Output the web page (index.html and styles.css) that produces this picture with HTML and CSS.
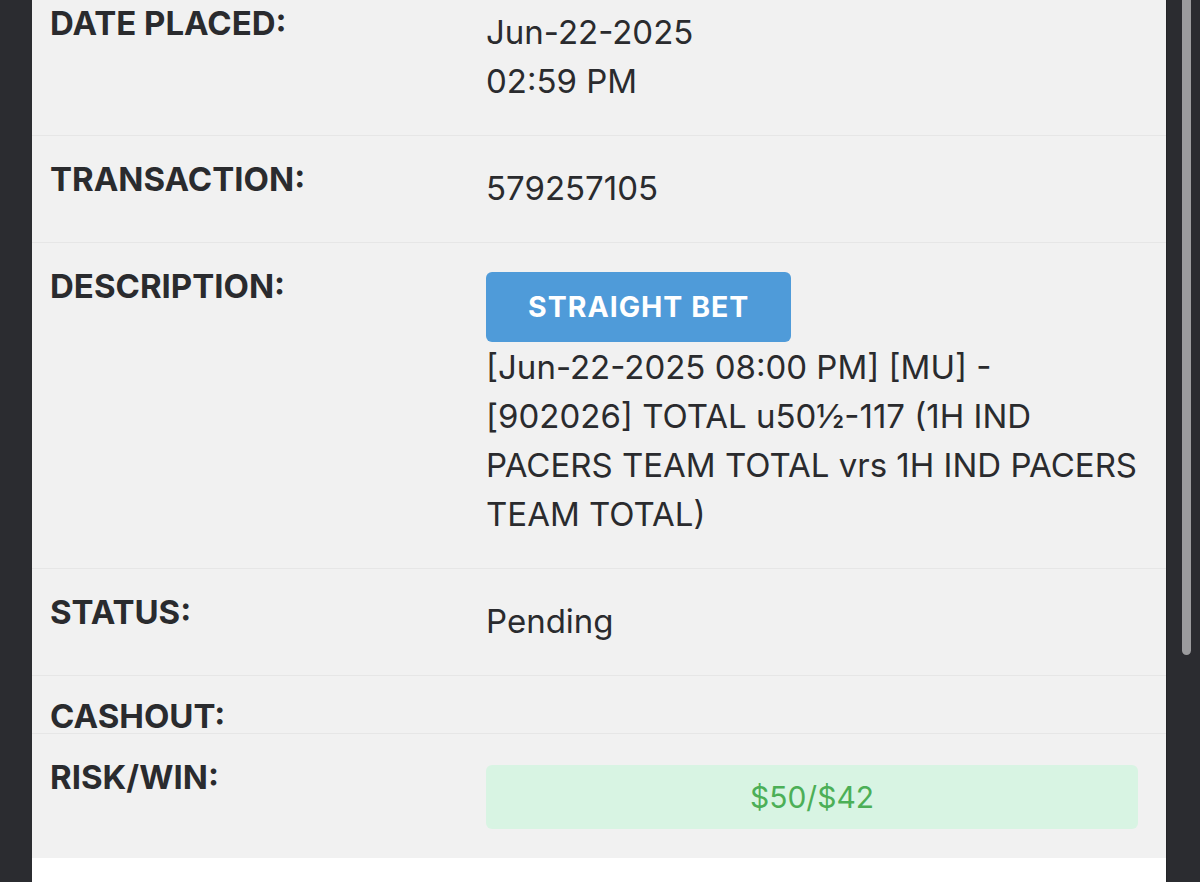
FILE: index.html
```html
<!DOCTYPE html>
<html>
<head>
<meta charset="utf-8">
<link rel="stylesheet" href="styles.css">
</head>
<body>
<div class="frame">
  <div class="side side-left"></div>
  <div class="content">
    <div class="panel">
      <div class="row row-first">
        <div class="label">DATE PLACED:</div>
        <div class="value">Jun-22-2025<br>02:59 PM</div>
      </div>
      <div class="row">
        <div class="label">TRANSACTION:</div>
        <div class="value">579257105</div>
      </div>
      <div class="row">
        <div class="label">DESCRIPTION:</div>
        <div class="value value-desc">
          <span class="badge">STRAIGHT BET</span>
          <div class="desc">[Jun-22-2025 08:00 PM] [MU] - [902026] TOTAL u50½-117 (1H IND PACERS TEAM TOTAL vrs 1H IND PACERS TEAM TOTAL)</div>
        </div>
      </div>
      <div class="row">
        <div class="label">STATUS:</div>
        <div class="value">Pending</div>
      </div>
      <div class="row row-compact">
        <div class="label">CASHOUT:</div>
        <div class="value"></div>
      </div>
      <div class="row row-last">
        <div class="label">RISK/WIN:</div>
        <div class="value value-risk">
          <div class="riskbox">$50/$42</div>
        </div>
      </div>
    </div>
    <div class="footer"></div>
  </div>
  <div class="side side-right">
    <div class="thumb"></div>
  </div>
</div>
</body>
</html>
```
FILE: styles.css
```css
html, body {
  margin: 0;
  padding: 0;
  height: 100%;
  overflow: hidden;
}
body {
  background: #2b2c30;
  font-family: "Inter", "Liberation Sans", sans-serif;
  color: #2a2b2e;
}
.frame {
  display: flex;
  height: 882px;
}
.side-left {
  width: 32px;
  flex: none;
  background: #2b2c30;
}
.side-right {
  width: 34px;
  flex: none;
  background: #2b2c30;
  border-left: 1px solid #232427;
  box-sizing: border-box;
}
.thumb {
  width: 9px;
  height: 655px;
  margin-left: 15px;
  background: #9b9b9d;
  border-radius: 0 0 5px 5px;
}
.content {
  flex: 1;
  display: flex;
  flex-direction: column;
  background: #ffffff;
}
.panel {
  background: #f1f1f1;
  margin-top: -20px;
}
.row {
  display: grid;
  grid-template-columns: 436px 1fr;
  padding: 24px 28px 29px 18px;
  border-bottom: 1px solid #e6e6e6;
}
.row-last {
  border-bottom: none;
}
.row-compact {
  padding-bottom: 0;
}
.row-compact .label {
  line-height: 33px;
}
.label {
  font-weight: 700;
  font-size: 33px;
  line-height: 38px;
  color: #2a2b2e;
}
.value {
  font-size: 33px;
  line-height: 49px;
  padding-top: 4px;
  color: #2a2b2e;
}
.value-desc {
  padding-top: 5px;
}
.badge {
  display: inline-block;
  background: #4f9bd9;
  color: #ffffff;
  font-weight: 700;
  font-size: 28.5px;
  letter-spacing: 1px;
  line-height: 70px;
  padding: 0 42px;
  border-radius: 6px;
  vertical-align: top;
}
.desc {
  margin-top: 1px;
}
.value-risk {
  padding-top: 7px;
}
.riskbox {
  background: #d8f4e3;
  color: #4caf57;
  border-radius: 6px;
  height: 64px;
  line-height: 64px;
  text-align: center;
  font-size: 30px;
}
.footer {
  flex: 1;
  background: #ffffff;
}
```
